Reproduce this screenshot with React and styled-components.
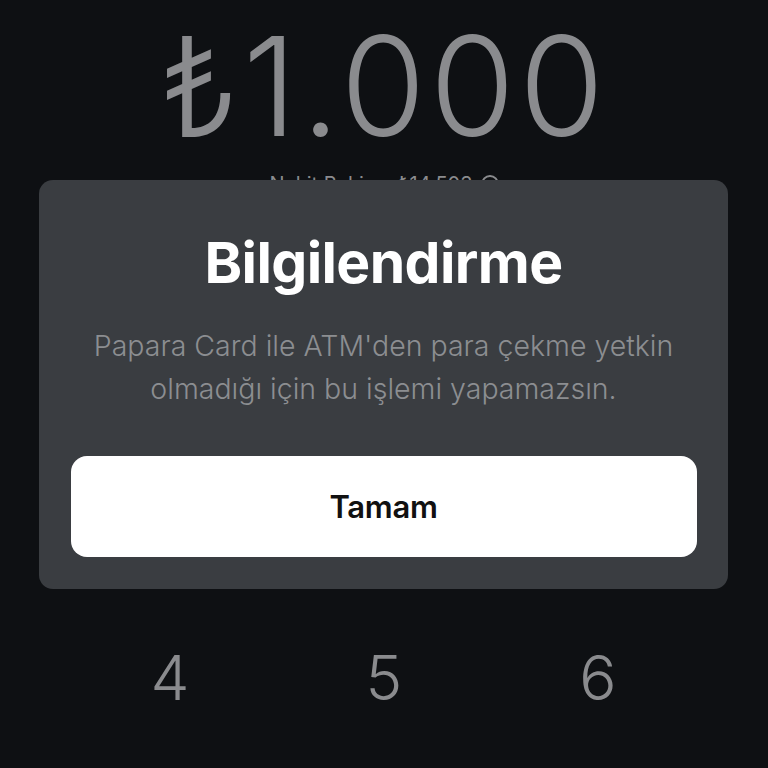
import React from 'react'
import styled, { createGlobalStyle } from 'styled-components'

const GlobalStyle = createGlobalStyle`
  html, body {
    margin: 0;
    padding: 0;
    background: #0e1013;
  }
  body {
    font-family: 'Inter', 'Noto Sans', sans-serif;
  }
`

const Screen = styled.div`
  position: relative;
  width: 768px;
  height: 768px;
  overflow: hidden;
  background: #0e1013;
  display: flex;
  flex-direction: column;
  align-items: center;
`

const Amount = styled.div`
  margin-top: 6px;
  font-size: 138px;
  font-weight: 300;
  line-height: 160px;
  color: #8a8b8e;
  letter-spacing: 4px;
`

const BalanceRow = styled.div`
  display: flex;
  align-items: center;
  gap: 8px;
  margin-top: 6px;
  font-size: 20px;
  color: #8a8b8e;
`

const InfoIcon = styled.span`
  width: 18px;
  height: 18px;
  border: 2px solid #8a8b8e;
  border-radius: 50%;
  box-sizing: border-box;
`

const Keypad = styled.div`
  margin-top: 442px;
  display: grid;
  grid-template-columns: repeat(3, 214px);
`

const Key = styled.div`
  text-align: center;
  font-size: 62px;
  font-weight: 300;
  line-height: 80px;
  color: #8a8b8e;
`

const Dialog = styled.div`
  position: absolute;
  left: 39px;
  top: 180px;
  width: 689px;
  height: 409px;
  box-sizing: border-box;
  background: #3a3d41;
  border-radius: 14px;
  padding: 48px 32px 0;
  display: flex;
  flex-direction: column;
  align-items: center;
`

const Title = styled.h2`
  margin: 0;
  font-size: 57px;
  font-weight: 700;
  color: #ffffff;
  line-height: 70px;
  letter-spacing: -0.6px;
`

const Message = styled.p`
  margin: 26px 0 0;
  font-size: 28.5px;
  font-weight: 300;
  line-height: 43px;
  color: #8c8e91;
  text-align: center;
`

const Button = styled.button`
  margin-top: 46px;
  width: 626px;
  height: 101px;
  border: none;
  border-radius: 16px;
  background: #ffffff;
  color: #111111;
  font-family: 'Inter', 'Noto Sans', sans-serif;
  font-size: 31px;
  font-weight: 600;
  letter-spacing: -0.3px;
`

const App = () => {
  return (
    <>
      <GlobalStyle />
      <Screen>
        <Amount>₺1.000</Amount>
        <BalanceRow>
          Nakit Bakiye: ₺14.503
          <InfoIcon />
        </BalanceRow>
        <Keypad>
          {['4', '5', '6'].map((k) => (
            <Key key={k}>{k}</Key>
          ))}
        </Keypad>
        <Dialog>
          <Title>Bilgilendirme</Title>
          <Message>
            Papara Card ile ATM'den para çekme yetkin
            <br />
            olmadığı için bu işlemi yapamazsın.
          </Message>
          <Button>Tamam</Button>
        </Dialog>
      </Screen>
    </>
  )
}

export default App
